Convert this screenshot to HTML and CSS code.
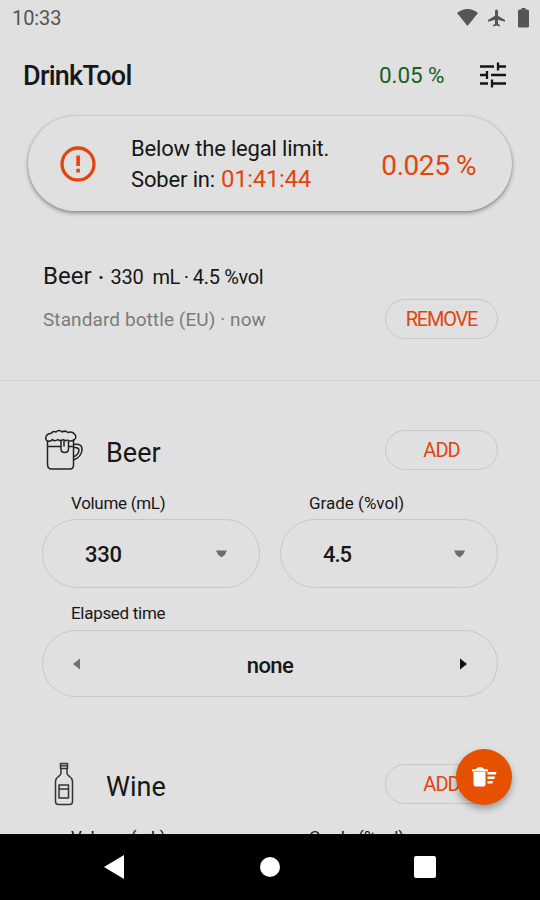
FILE: index.html
```
<!DOCTYPE html>
<html lang="en">
<head>
<meta charset="utf-8">
<title>DrinkTool</title>
<link rel="stylesheet" href="styles.css">
</head>
<body>
<div class="phone">
  <header class="status">
    <span class="clock">10:33</span>
    <svg class="status-icons" width="76" height="22" viewBox="0 0 76 22" fill="#555">
      <path d="M0 6Q10.500-2 21 6L10.500 19Z"/>
      <path d="M39.500 2.500q1.500 0 1.500 1.800v4.500l7 4.200v1.800l-7-2v4l2 1.500v1.200l-3.500-1-3.500 1v-1.200l2-1.500v-4l-7 2v-1.800l7-4.200v-4.500q0-1.800 1.500-1.800Z"/>
      <path d="M62.500 2.500h2V1h4v1.500h2q1.500 0 1.500 1.500v15q0 1.500-1.500 1.500h-8Q61 20.500 61 19V4q0-1.500 1.500-1.500Z"/>
    </svg>
  </header>
  <div class="appbar">
    <h1 class="title">DrinkTool</h1>
    <span class="limit">0.05 %</span>
    <svg class="tune" width="26" height="26" viewBox="0 0 26 26" fill="none" stroke="#151515" stroke-width="2.300">
      <path d="M0 4.500h14M18 4.500h8M18 .5v8M0 13h6.500M11 13h15M7 9v8M0 21.500h8M12 21.500h14M12 17.500v8"/>
    </svg>
  </div>
  <section class="summary">
    <svg class="alert" width="36" height="36" viewBox="0 0 36 36">
      <circle cx="18" cy="18" r="16" fill="none" stroke="#e2450f" stroke-width="3.300"/>
      <path d="M16.300 9.500h3.600v10.500h-3.600ZM16.300 22.800h3.600v3.600h-3.600Z" fill="#e2450f"/>
    </svg>
    <div class="message">
      <div class="below">Below the legal limit.</div>
      <div class="sober"><span class="sober-label">Sober in:</span><span class="timer">01:41:44</span></div>
    </div>
    <span class="level">0.025 %</span>
  </section>
  <section class="entry">
    <div class="entry-title"><span class="drink">Beer</span><span class="dot">·</span><span class="amount">330</span><span class="unit">mL</span><span class="dot2">·</span><span class="strength">4.5 %vol</span></div>
    <div class="entry-row"><span class="detail">Standard bottle (EU) · now</span><button class="pill remove">REMOVE</button></div>
  </section>
  <main class="content">
    <section class="block">
      <div class="head">
        <svg class="icon" width="42" height="42" viewBox="-1.500 0 42 42" fill="none" stroke="#222" stroke-width="1.500" stroke-linejoin="round" stroke-linecap="round">
          <path d="M4.500 12.500Q1.500 11 2.500 7.500Q4 4 7.500 4.500Q9.500 1.500 12.500 3Q15.500 0 18.500 3Q21.500 1 24.500 3.500Q28.500 2 31 5Q34 8 30.500 11Q27 13 24 11Q22 12.500 20 10.500Q17 13 14.500 10.500Q11 13 9 10.500Q7 13 4.500 12"/>
          <path d="M4 12v23q0 5 4 5h18.500q3.500 0 3.500-4V11M4 17.500h13.500M25.500 17.500h4.500M17.500 11v9q0 3.500 3.500 3.500q4 0 4-3.500v-8M20.500 12v5M30 15.500q9-1.500 8.500 5.500q-.500 7-8.500 10M30 18.500q5.500-.500 5.500 3q-.500 4-5.500 6.500"/>
        </svg>
        <h2 class="name">Beer</h2><button class="pill add">ADD</button>
      </div>
      <div class="labels"><span class="label volume">Volume (mL)</span><span class="label grade">Grade (%vol)</span></div>
      <div class="fields">
        <div class="select"><span class="value">330</span><svg width="11" height="8" viewBox="0 0 11 8"><path d="M0 .5h11L9 4.500 5.500 7.500 2 4.500Z" fill="#6c6c6c"/></svg></div>
        <div class="select"><span class="value grade-value">4.5</span><svg width="11" height="8" viewBox="0 0 11 8"><path d="M0 .5h11L9 4.500 5.500 7.500 2 4.500Z" fill="#6c6c6c"/></svg></div>
      </div>
      <div class="label elapsed">Elapsed time</div>
      <div class="stepper">
        <svg width="7" height="12" viewBox="0 0 7 12"><path d="M7 .5v11L0 6Z" fill="#707070"/></svg>
        <span class="none">none</span>
        <svg width="7" height="12" viewBox="0 0 7 12"><path d="M0 .5v11L7 6Z" fill="#111"/></svg>
      </div>
    </section>
    <section class="block">
      <div class="head">
        <svg class="icon" width="42" height="44" viewBox="-.500 0 42 44" fill="none" stroke="#333" stroke-width="1.500" stroke-linejoin="round">
          <path d="M18 1.500h7v5h-7ZM18 3.800h7M18.500 6.500v4.500q0 2-2.500 3.500q-3 2-3 5v20q0 3 3 3h11q3 0 3-3v-20q0-3-3-5q-2.500-1.500-2.500-3.500V6.500"/>
          <path d="M16.500 23h9.500v13h-9.500ZM16.500 27h9.500"/>
        </svg>
        <h2 class="name wine">Wine</h2><button class="pill add">ADD</button>
      </div>
      <div class="labels"><span class="label volume">Volume (mL)</span><span class="label grade">Grade (%vol)</span></div>
    </section>
  </main>
  <nav class="nav">
    <svg width="20" height="24" viewBox="0 0 20 24"><path d="M20 0v24L0 12Z" fill="#fff"/></svg>
    <svg width="22" height="20" viewBox="0 0 22 20"><circle cx="12" cy="10" r="10" fill="#fff"/></svg>
    <svg width="22" height="22" viewBox="0 0 22 22"><rect width="22" height="22" rx="2" fill="#fff"/></svg>
  </nav>
  <button class="fab" aria-label="Clear all">
    <svg width="25" height="20" viewBox="0 0 25 20" fill="#fff"><path d="M0 2.200h3.500l2.500-2h4l2.500 2H16v2.300H0ZM1.500 5h12v12.500q0 2-2 2h-8q-2 0-2-2ZM15.500 5h9l-.600 2.500h-8.400ZM15.500 9.500h7.500l-.600 2.500h-6.900ZM15.500 14h5.500l-.600 2.500h-4.900Z"/></svg>
  </button>
</div>
</body>
</html>
```
FILE: styles.css
```
* { box-sizing: border-box; }
body { margin: 0; background: #e0e0e0; font-family: Roboto, "Liberation Sans", sans-serif; color: #171717; }
svg { display: block; flex: none; }
h1, h2 { margin: 0; font-weight: 400; }
button { font-family: inherit; padding: 0; }
.phone { position: relative; width: 540px; height: 900px; overflow: hidden; display: flex; flex-direction: column; white-space: nowrap; }
.status { flex: none; height: 36px; padding: 0 11px 0 12px; display: flex; align-items: center; justify-content: space-between; }
.clock { font-size: 20px; color: #555; letter-spacing: -.1px; }
.status-icons { margin-right: -4px; }
.appbar { flex: none; height: 80px; padding: 0 34px 2px 23px; display: flex; align-items: center; }
.title { font-size: 27px; font-weight: 500; letter-spacing: -.75px; flex: 1; padding-top: 2px; }
.limit { font-size: 22.5px; color: #17601d; letter-spacing: -.1px; width: 101px; }
.summary { flex: none; height: 95px; margin: 0 28px; padding: 0 36px 0 32px; border-radius: 48px; display: flex; align-items: center; box-shadow: 0 2px 4px rgba(0,0,0,.38), 0 0 2px rgba(0,0,0,.14); }
.message { margin-left: 35px; flex: 1; line-height: 31px; font-size: 22px; }
.below { letter-spacing: -.18px; }
.sober { display: flex; gap: 6px; }
.sober-label { letter-spacing: -.15px; }
.timer { color: #e2450f; font-size: 24px; letter-spacing: -.35px; }
.level { color: #e2450f; font-size: 28px; letter-spacing: -.45px; padding-top: 3px; }
.entry { flex: none; height: 170px; padding: 47px 42px 0 43px; border-bottom: 1px solid #d2d2d2; }
.entry-title { height: 35px; display: flex; align-items: baseline; font-size: 20px; line-height: 36px; }
.drink { font-size: 24px; }
.dot { width: 19px; text-align: center; font-weight: 700; }
.amount { width: 42px; letter-spacing: -.3px; }
.unit { letter-spacing: -.5px; }
.dot2 { width: 13px; text-align: center; }
.strength { letter-spacing: -.35px; }
.entry-row { margin-top: 6px; height: 40px; display: flex; align-items: center; justify-content: space-between; }
.detail { font-size: 19px; letter-spacing: .09px; color: #7b7b7b; }
.pill { width: 113px; height: 40px; border: 1px solid #c7c7c7; border-radius: 20px; background: transparent; color: #e2450f; font-size: 20px; }
.remove { letter-spacing: -1.2px; }
.add { letter-spacing: -1px; }
.content { flex: 1; min-height: 0; overflow: hidden; padding: 49px 42px 0; }
.block { height: 334px; }
.head { height: 40px; display: flex; align-items: center; }
.name { font-size: 27px; margin-left: 22px; padding-top: 5px; flex: 1; }
.labels { height: 49px; padding: 24px 0 0 29px; display: grid; grid-template-columns: 238px auto; }
.label { font-size: 17px; line-height: 18px; }
.volume, .elapsed { letter-spacing: -.3px; }
.fields { display: grid; grid-template-columns: 218px 218px; gap: 20px; }
.select { height: 69px; border: 1px solid #c7c7c7; border-radius: 35px; padding: 0 32px 0 42px; display: flex; align-items: center; justify-content: space-between; }
.value { font-size: 22px; font-weight: 500; letter-spacing: -.3px; padding-top: 2px; }
.grade-value { letter-spacing: -1.1px; }
.elapsed { padding: 16px 0 0 29px; height: 42px; }
.stepper { height: 67px; border: 1px solid #c7c7c7; border-radius: 34px; padding: 0 30px; display: flex; align-items: center; justify-content: space-between; }
.none { font-size: 22px; font-weight: 500; letter-spacing: -.6px; padding-top: 3px; }
.nav { flex: none; height: 66px; background: #000; display: flex; align-items: center; justify-content: space-between; padding: 0 104px; }
.fab { position: absolute; left: 456px; top: 749px; width: 56px; height: 56px; border: 0; border-radius: 50%; background: #e65100; box-shadow: 0 4px 7px rgba(0,0,0,.32); display: flex; align-items: center; justify-content: center; }
```
